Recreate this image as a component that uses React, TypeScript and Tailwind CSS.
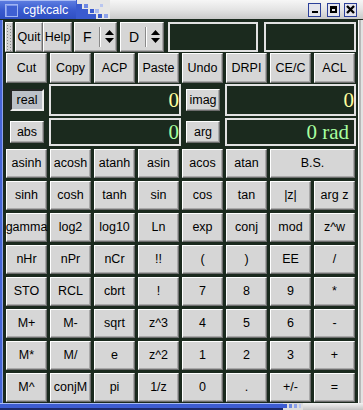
import React from 'react';

const KEYS: string[][] = [
  ['asinh', 'acosh', 'atanh', 'asin', 'acos', 'atan', 'B.S.'],
  ['sinh', 'cosh', 'tanh', 'sin', 'cos', 'tan', '|z|', 'arg z'],
  ['gamma', 'log2', 'log10', 'Ln', 'exp', 'conj', 'mod', 'z^w'],
  ['nHr', 'nPr', 'nCr', '!!', '(', ')', 'EE', '/'],
  ['STO', 'RCL', 'cbrt', '!', '7', '8', '9', '*'],
  ['M+', 'M-', 'sqrt', 'z^3', '4', '5', '6', '-'],
  ['M*', 'M/', 'e', 'z^2', '1', '2', '3', '+'],
  ['M^', 'conjM', 'pi', '1/z', '0', '.', '+/-', '='],
];

const EDIT = ['Cut', 'Copy', 'ACP', 'Paste', 'Undo', 'DRPI', 'CE/C', 'ACL'];

const raised =
  'flex items-center justify-center bg-[#d6d6d6] border border-t-white border-l-white border-r-[#6e6e6e] border-b-[#6e6e6e] shadow-[inset_-1px_-1px_0_#a9a9a9] text-black leading-none whitespace-nowrap';

function Key({ label, wide }: { label: string; wide?: boolean }) {
  return (
    <div className={`${raised} text-[12.5px] ${wide ? 'col-span-2' : ''}`}>
      {label}
    </div>
  );
}

function Spin() {
  return (
    <svg width="9" height="14" viewBox="0 0 9 14">
      <polygon points="4.5,0 9,5 0,5" fill="#000" />
      <polygon points="0,8 9,8 4.5,13" fill="#000" />
    </svg>
  );
}

function Combo({ label, w }: { label: string; w: string }) {
  return (
    <div className={`${raised} ${w} h-[30px] justify-start text-[14px]`}>
      <span className="ml-[8px] w-[15px]">{label}</span>
      <span className="ml-[1px] w-[2px] h-[20px] border-l border-l-[#8a8a8a] border-r border-r-white" />
      <span className="ml-[4px]">
        <Spin />
      </span>
    </div>
  );
}

function Display({ text, color, w, h, serifRad }: { text: string; color: string; w: string; h: string; serifRad?: boolean }) {
  return (
    <div
      className={`${w} ${h} flex items-center justify-end overflow-hidden border-2 border-[#e2e2e2] bg-[#1b2a1e] font-['Liberation_Serif',serif] text-[21px] leading-none ${color} ${serifRad ? 'pr-[5px] text-[20px]' : ''}`}
    >
      {text}
    </div>
  );
}

function TitleBar() {
  return (
    <div className="flex h-[20px] border-b border-b-[#1b2a1e]">
      <div className="flex w-[76px] items-center bg-linear-to-b from-[#5c7ce0] via-[#3a5bcf] to-[#2f4fc2] border-t border-t-[#a9bcf5]">
        <div className="ml-[5px] h-[13px] w-[13px] border border-[#9fb3f2] bg-[#3f60d2] shadow-[inset_1px_1px_0_#7d96ea]" />
        <span className="ml-[5px] text-[12.5px] text-white font-['Liberation_Sans',sans-serif]">cgtkcalc</span>
      </div>
      <svg width="34" height="19" viewBox="0 0 34 19" className="shrink-0">
        <rect x="0" y="0" width="34" height="19" fill="#e6e6e6" />
        <rect x="0" y="0" width="1" height="19" fill="#3a5bcf" />
        <rect x="0" y="4" width="6" height="15" fill="#3a5bcf" />
        <rect x="6" y="9" width="6" height="10" fill="#3a5bcf" />
        <rect x="12" y="14" width="8" height="5" fill="#3a5bcf" />
        <rect x="8" y="4" width="4" height="4" fill="#6d88e2" />
        <rect x="14" y="9" width="4" height="4" fill="#3a5bcf" />
        <rect x="19" y="9" width="4" height="4" fill="#a9b9ee" />
        <rect x="22" y="14" width="4" height="4" fill="#3a5bcf" />
        <rect x="28" y="14" width="4" height="4" fill="#8da2ea" />
        <rect x="24" y="4" width="3" height="3" fill="#b9c6f0" />
      </svg>
      <div className="flex flex-1 items-center justify-end bg-linear-to-b from-[#f6f6f6] via-[#e4e4e4] to-[#c9c9c9] pr-[6px]">
        <div className="flex h-[14px] w-[13px] items-end justify-center border border-[#2b3f99] bg-[#e4e4ec] pb-[3px]">
          <div className="h-[2px] w-[6px] bg-black" />
        </div>
        <div className="ml-[6px] flex h-[14px] w-[13px] items-center justify-center border border-[#2b3f99] bg-[#e4e4ec]">
          <div className="h-[7px] w-[7px] border-2 border-t-[3px] border-black" />
        </div>
        <div className="ml-[4px] flex h-[14px] w-[13px] items-center justify-center border border-[#2b3f99] bg-[#e4e4ec]">
          <svg width="9" height="9" viewBox="0 0 9 9">
            <path d="M1 1 L8 8 M8 1 L1 8" stroke="#000" strokeWidth="2.4" />
          </svg>
        </div>
      </div>
    </div>
  );
}

export default function App() {
  return (
    <div className="flex h-[410px] w-[363px] flex-col overflow-hidden bg-[#1b2a1e] font-['Liberation_Sans',sans-serif]">
      <TitleBar />

      <div className="flex flex-1">
        {/* left frame */}
        <div className="w-[2px] bg-[#4565d5]" />
        <div className="w-[1px] bg-[#8fa4ec]" />

        <div className="flex w-[355px] flex-col">
          {/* toolbar */}
          <div className="mt-[2px] flex h-[30px] items-stretch">
            <div className="ml-[2px] w-[8px] bg-[#d2d2d2] border border-t-white border-l-white border-r-[#8a8a8a] border-b-[#8a8a8a]">
              <svg width="6" height="28" viewBox="0 0 6 28">
                {Array.from({ length: 9 }).map((_, i) => (
                  <g key={i}>
                    <rect x="1" y={2 + i * 3} width="1" height="1" fill="#888" />
                    <rect x="4" y={3 + i * 3} width="1" height="1" fill="#888" />
                  </g>
                ))}
              </svg>
            </div>
            <div className={`${raised} ml-[2px] w-[28px] text-[12.5px]`}>Quit</div>
            <div className={`${raised} w-[29px] text-[12.5px]`}>Help</div>
            <div className="ml-[2px]">
              <Combo label="F" w="w-[43px]" />
            </div>
            <div className="ml-[3px]">
              <Combo label="D" w="w-[44px]" />
            </div>
            <div className="ml-[4px] w-[90px] border-2 border-[#e2e2e2] bg-[#1b2a1e]" />
            <div className="ml-[6px] w-[92px] border-2 border-[#e2e2e2] bg-[#1b2a1e]" />
          </div>

          {/* edit row */}
          <div className="mt-[1px] grid h-[30px] grid-cols-[repeat(8,41px)] gap-[3px] pl-[3px]">
            {EDIT.map((k) => (
              <Key key={k} label={k} />
            ))}
          </div>

          {/* real / imag */}
          <div className="mt-[1px] flex h-[32px] items-center pl-[7px]">
            <div className="flex h-[22px] w-[34px] items-center justify-center border-2 border-t-[#262626] border-l-[#262626] border-r-[#eeeeee] border-b-[#eeeeee] bg-[#bcc0c8] text-[12.5px] text-black">
              real
            </div>
            <div className="ml-[5px]">
              <Display text="0" color="text-[#ffffa0]" w="w-[132px]" h="h-[32px]" />
            </div>
            <div className={`${raised} ml-[5px] h-[22px] w-[34px] text-[12.5px]`}>imag</div>
            <div className="ml-[5px]">
              <Display text="0" color="text-[#ffffa0]" w="w-[131px]" h="h-[32px]" />
            </div>
          </div>

          {/* abs / arg */}
          <div className="mt-[2px] flex h-[28px] items-center pl-[7px]">
            <div className={`${raised} h-[22px] w-[34px] text-[12.5px]`}>abs</div>
            <div className="ml-[5px]">
              <Display text="0" color="text-[#a8ffa0]" w="w-[132px]" h="h-[28px]" />
            </div>
            <div className={`${raised} ml-[5px] h-[22px] w-[34px] text-[12.5px]`}>arg</div>
            <div className="ml-[5px]">
              <Display text="0 rad" color="text-[#a8ffa0]" w="w-[131px]" h="h-[28px]" serifRad />
            </div>
          </div>

          {/* keypad */}
          <div className="mt-[3px] grid grid-cols-[repeat(8,41px)] auto-rows-[29px] gap-[3px] pl-[3px]">
            {KEYS.flat().map((k, i) => (
              <Key key={i} label={k} wide={k === 'B.S.'} />
            ))}
          </div>
        </div>

        {/* right frame */}
        <div className="w-[1px] bg-white" />
        <div className="w-[2px] bg-[#b8b8b8]" />
        <div className="w-[2px] bg-[#e2e2e2]" />
      </div>

      {/* bottom frame */}
      <div className="flex h-[7px]">
        <div className="w-[283px] border-t border-t-[#a9bcf5] bg-[#3d5dd2] border-b-2 border-b-[#1c2a6a]" />
        <svg width="20" height="7" viewBox="0 0 20 7" className="shrink-0">
          <rect x="0" y="0" width="20" height="7" fill="#dcdcdc" />
          <rect x="0" y="1" width="4" height="4" fill="#3d5dd2" />
          <rect x="6" y="1" width="3" height="4" fill="#6d88e2" />
          <rect x="11" y="1" width="3" height="4" fill="#8da2ea" />
          <rect x="16" y="1" width="2" height="4" fill="#b9c6f0" />
        </svg>
        <div className="flex-1 bg-linear-to-b from-[#f2f2f2] to-[#c4c4c4]" />
      </div>
    </div>
  );
}
